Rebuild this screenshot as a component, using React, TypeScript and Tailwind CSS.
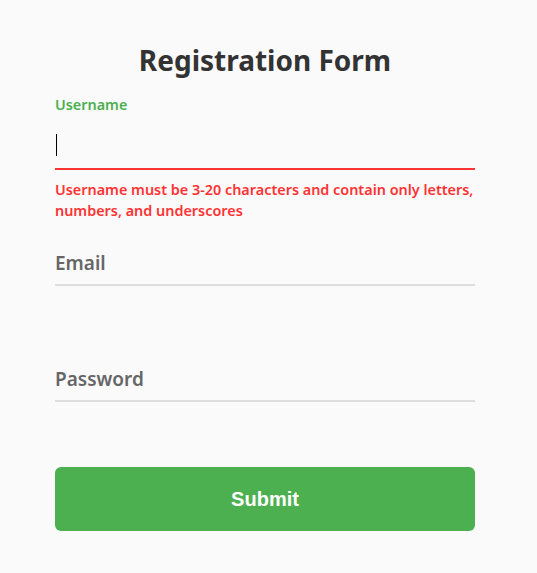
import { useState } from "react";

const font = { fontFamily: '"Noto Sans", "Open Sans", sans-serif' };

const Field = ({ label, type }: { label: string; type: string }) => {
  return (
    <div className="relative h-[58px]">
      <label className="absolute left-0 top-[23px] text-[19px] font-semibold text-[#666] leading-[24px]">
        {label}
      </label>
      <input
        type={type}
        className="absolute inset-x-0 bottom-0 h-[40px] bg-transparent border-b-2 border-[#ddd] outline-none"
      />
    </div>
  );
};

const App = () => {
  const [username, setUsername] = useState("");

  return (
    <div className="min-h-[573px] bg-[#fafafa]" style={font}>
      <form className="w-[420px] ml-[55px] pt-[40px]" onSubmit={(e) => e.preventDefault()}>
        <h1 className="text-center text-[28px] font-bold leading-[40px] text-[#333]">
          Registration Form
        </h1>
        <div className="mt-[15px]">
          <label className="block text-[14.4px] font-semibold leading-[20px] text-[#4caf50]">
            Username
          </label>
          <div className="h-[55px] border-b-2 border-[#f33] flex items-end pb-[12px]">
            <span className="ml-[1px] w-px h-[22px] bg-black" />
            <input
              className="flex-1 h-[22px] bg-transparent outline-none"
              value={username}
              onChange={(e) => setUsername(e.target.value)}
            />
          </div>
          <p className="mt-[9px] text-[14.4px] font-semibold leading-[21px] text-[#f33]">
            Username must be 3-20 characters and contain only letters, numbers, and underscores
          </p>
        </div>
        <div className="mt-[7px]">
          <Field label="Email" type="email" />
        </div>
        <div className="mt-[58px]">
          <Field label="Password" type="password" />
        </div>
        <button
          type="submit"
          className="mt-[65px] w-full h-[64px] rounded-[6px] bg-[#4caf50] text-white text-[20px] font-bold"
          style={{ fontFamily: '"Liberation Sans", Arial, sans-serif' }}
        >
          Submit
        </button>
      </form>
    </div>
  );
};

export default App;
